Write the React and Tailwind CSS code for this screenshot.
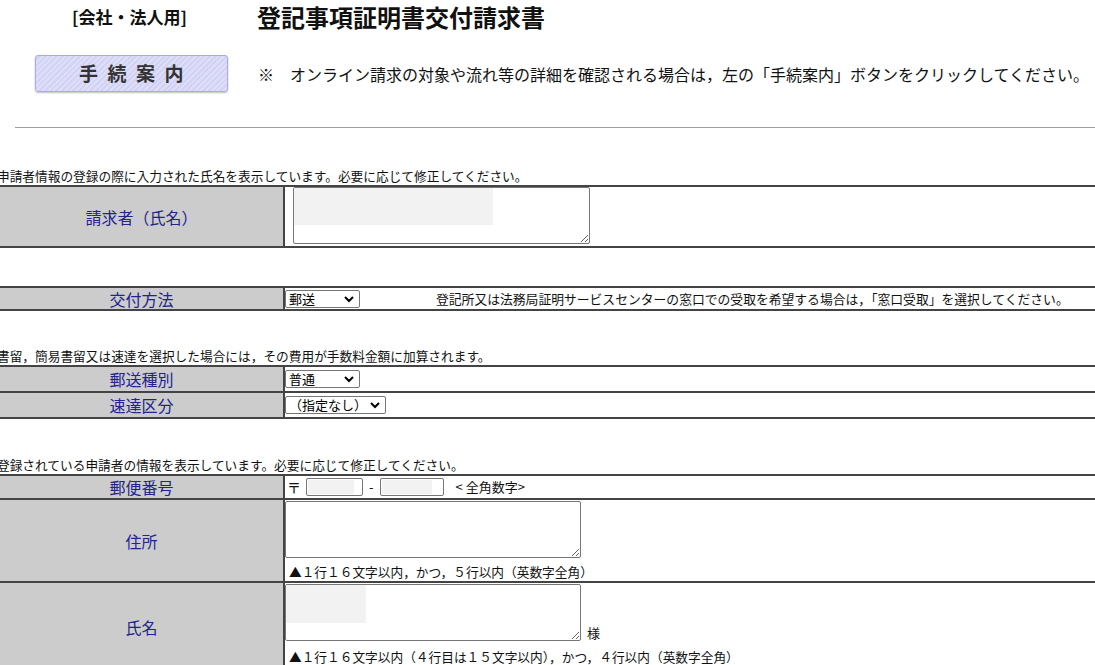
const Label = ({ children }) => (
  <div className="bg-[#cccccc] border-r-2 border-[#444] flex items-center justify-center text-[16px] leading-[20px] text-[#23238f]">
    {children}
  </div>
);

const Sel = ({ w, children }) => (
  <div className={`relative ${w} h-[18px]`}>
    <select className="block appearance-none w-full h-full py-0 border border-[#767676] rounded-[2px] bg-white text-[13px] leading-[16px] text-black pl-[3px]">
      <option>{children}</option>
    </select>
    <svg className="absolute right-[6px] top-[6px] pointer-events-none" width="10" height="7" viewBox="0 0 10 7">
      <path d="M1 1 L5 5 L9 1" fill="none" stroke="#000" strokeWidth="2" />
    </svg>
  </div>
);

const Caption = ({ children }) => (
  <p className="h-[19px] text-[12.7px] leading-[19px] ml-[-3px] whitespace-nowrap">{children}</p>
);

export default function App() {
  return (
    <div className="w-[1095px] h-[665px] overflow-hidden bg-white text-[#111] font-['Noto_Sans_CJK_JP',sans-serif]">
      {/* header */}
      <div className="flex items-center h-[34px]">
        <div className="w-[257px] pl-[72px] text-[17px] font-bold">[会社・法人用]</div>
        <h1 className="text-[24px] font-bold leading-none">登記事項証明書交付請求書</h1>
      </div>

      <div className="flex items-center mt-[21px] pl-[35px]">
        <button className="w-[193px] h-[37px] rounded-[3px] border border-[#a9a9ec] shadow-[0_1px_2px_rgba(0,0,0,0.25)] bg-[repeating-linear-gradient(135deg,#dedefa_0px,#dedefa_2px,#d2d2f3_2px,#d2d2f3_4px)] text-[19px] font-bold tracking-[0.5em] text-[#333] pl-[9px]">
          手続案内
        </button>
        <p className="ml-[30px] text-[16px] leading-[20px] whitespace-nowrap">
          ※　オンライン請求の対象や流れ等の詳細を確認される場合は，左の「手続案内」ボタンをクリックしてください。
        </p>
      </div>

      <div className="ml-[15px] mt-[35px] border-t border-[#a0a0a0]" />

      {/* 請求者 */}
      <div className="mt-[38px]">
        <Caption>申請者情報の登録の際に入力された氏名を表示しています。必要に応じて修正してください。</Caption>
        <div className="border-y-2 border-[#444] grid grid-cols-[285px_1fr] h-[63px]">
          <Label>請求者（氏名）</Label>
          <div className="pl-[8px]">
            <div className="relative w-[297px] h-[57px]">
              <textarea className="w-full h-full border border-[#767676] rounded-[2px] bg-white block" />
              <div className="absolute left-[1px] top-[1px] w-[199px] h-[37px] bg-[#f2f2f2]" />
            </div>
          </div>
        </div>
      </div>

      {/* 交付方法 */}
      <div className="mt-[38px] border-y-2 border-[#444] grid grid-cols-[285px_1fr] h-[25px]">
        <Label>交付方法</Label>
        <div className="flex items-center">
          <Sel w="w-[75px]">郵送</Sel>
          <span className="ml-[76px] text-[12.8px] leading-[18px] whitespace-nowrap">
            登記所又は法務局証明サービスセンターの窓口での受取を希望する場合は，「窓口受取」を選択してください。
          </span>
        </div>
      </div>

      {/* 郵送種別 */}
      <div className="mt-[35px]">
        <Caption>書留，簡易書留又は速達を選択した場合には，その費用が手数料金額に加算されます。</Caption>
        <div className="border-t-2 border-[#444]">
          <div className="grid grid-cols-[285px_1fr] h-[26px] border-b-2 border-[#444]">
            <Label>郵送種別</Label>
            <div className="flex items-center">
              <Sel w="w-[75px]">普通</Sel>
            </div>
          </div>
          <div className="grid grid-cols-[285px_1fr] h-[26px] border-b-2 border-[#444]">
            <Label>速達区分</Label>
            <div className="flex items-center">
              <Sel w="w-[101px]">（指定なし）</Sel>
            </div>
          </div>
        </div>
      </div>

      {/* 申請者情報 */}
      <div className="mt-[36px]">
        <Caption>登録されている申請者の情報を表示しています。必要に応じて修正してください。</Caption>
        <div className="border-t-2 border-[#444]">
          <div className="grid grid-cols-[285px_1fr] h-[24px] border-b-2 border-[#444]">
            <Label>郵便番号</Label>
            <div className="flex items-center text-[13px] leading-[18px] pl-[2px]">
              <span className="text-[14px]">〒</span>
              <div className="relative ml-[5px] w-[57px] h-[18px] border border-[#767676] rounded-[2px]">
                <div className="absolute left-[1px] top-[1px] w-[46px] h-[14px] bg-[#f2f2f2]" />
              </div>
              <span className="mx-[6px]">-</span>
              <div className="relative w-[64px] h-[18px] border border-[#767676] rounded-[2px]">
                <div className="absolute left-[1px] top-[1px] w-[50px] h-[14px] bg-[#f2f2f2]" />
              </div>
              <span className="ml-[12px]">&lt; 全角数字&gt;</span>
            </div>
          </div>
          <div className="grid grid-cols-[285px_1fr] h-[83px] border-b-2 border-[#444]">
            <Label>住所</Label>
            <div className="pt-px">
              <textarea className="block w-[296px] h-[57px] border border-[#767676] rounded-[2px] bg-white" />
              <p className="mt-[5px] pl-[4px] text-[12.7px] leading-[18px] whitespace-nowrap">▲１行１６文字以内，かつ，５行以内（英数字全角）</p>
            </div>
          </div>
          <div className="grid grid-cols-[285px_1fr] h-[88px]">
            <Label>氏名</Label>
            <div className="pt-px">
              <div className="flex items-end">
                <div className="relative w-[296px] h-[57px]">
                  <textarea className="block w-full h-full border border-[#767676] rounded-[2px] bg-white" />
                  <div className="absolute left-[1px] top-[1px] w-[80px] h-[38px] bg-[#f2f2f2]" />
                </div>
                <span className="ml-[6px] text-[13px] leading-[16px]">様</span>
              </div>
              <p className="mt-[7px] pl-[4px] text-[12.7px] leading-[18px] whitespace-nowrap">▲１行１６文字以内（４行目は１５文字以内），かつ，４行以内（英数字全角）</p>
            </div>
          </div>
        </div>
      </div>
    </div>
  );
}
